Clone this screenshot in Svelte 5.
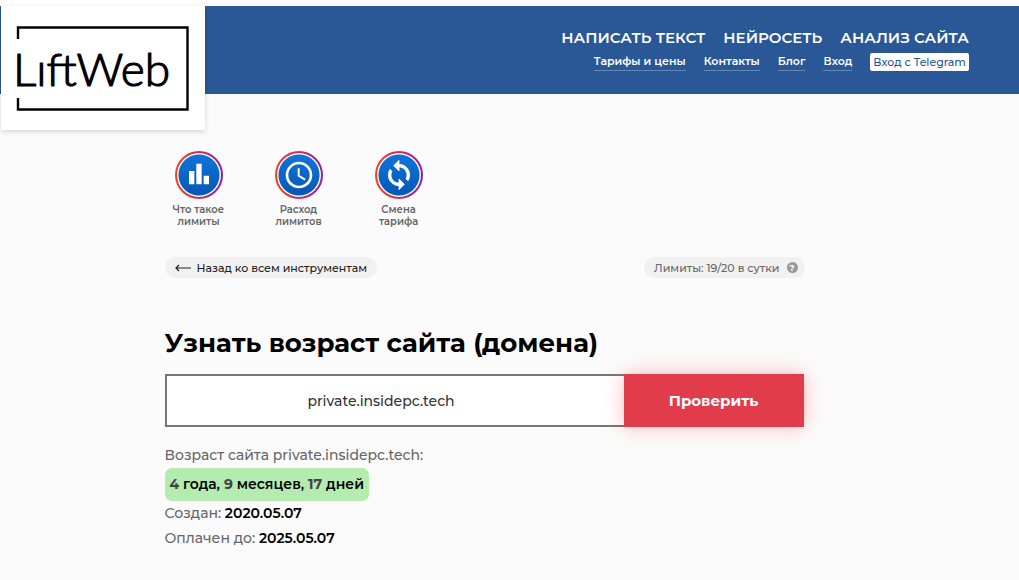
<script>
	let domain = 'private.insidepc.tech';

	const mainMenu = ['Написать текст', 'Нейросеть', 'Анализ сайта'];
	const subMenu = ['Тарифы и цены', 'Контакты', 'Блог', 'Вход'];

	const stories = [
		{ icon: 'chart', first: 'Что такое', second: 'лимиты' },
		{ icon: 'clock', first: 'Расход', second: 'лимитов' },
		{ icon: 'sync', first: 'Смена', second: 'тарифа' }
	];
</script>

<div class="page">
	<header>
		<a class="logo" href="#home" aria-label="LiftWeb">
			<svg viewBox="0 0 204 124" width="204" height="124">
				<path d="M17 33V21.500H186.500V103.500H17V92" fill="none" stroke="#000" stroke-width="2.400" />
				<text x="12" y="80">LıftWeb</text>
			</svg>
		</a>
		<nav>
			<div class="main-menu">
				{#each mainMenu as item}
					<a href="#menu">{item}</a>
				{/each}
			</div>
			<div class="sub-menu">
				{#each subMenu as item}
					<a href="#menu">{item}</a>
				{/each}
				<button class="telegram">Вход с Telegram</button>
			</div>
		</nav>
	</header>

	<main>
		<div class="stories">
			{#each stories as story}
				<a class="story" href="#story">
					<span class="ring">
						<svg viewBox="0 0 24 24" width="32" height="32">
							{#if story.icon == 'chart'}
								<path d="M4.500 9h4v10h-4zM10 3.500h4V19h-4zM15.500 12.500h4V19h-4z" />
							{:else if story.icon == 'clock'}
								<path d="M12 2C6.500 2 2 6.500 2 12s4.500 10 10 10 10-4.500 10-10S17.500 2 12 2zm0 18c-4.400 0-8-3.600-8-8s3.600-8 8-8 8 3.600 8 8-3.600 8-8 8zm.5-13H11v6l5.200 3.200.8-1.300-4.500-2.700V7z" />
							{:else}
								<path d="M12 4V1L8 5l4 4V6c3.300 0 6 2.700 6 6 0 1-.25 1.970-.7 2.800l1.460 1.460A7.900 7.900 0 0 0 20 12c0-4.420-3.580-8-8-8zm0 14c-3.310 0-6-2.690-6-6 0-1 .25-1.970.7-2.800L5.240 7.740A7.900 7.900 0 0 0 4 12c0 4.420 3.580 8 8 8v3l4-4-4-4v3z" stroke="#fff" stroke-width=".6" />
							{/if}
						</svg>
					</span>
					<span>{story.first}<br />{story.second}</span>
				</a>
			{/each}
		</div>

		<div class="bar">
			<a class="pill back" href="#tools">
				<svg viewBox="0 0 16 8" width="16" height="8">
					<path d="M16 4H1M4 1 1 4l3 3" fill="none" stroke="#222" stroke-width="1.200" />
				</svg>
				Назад ко всем инструментам
			</a>
			<div class="pill limits">
				Лимиты: 19/20 в сутки
				<button class="help" aria-label="Подробнее о лимитах">?</button>
			</div>
		</div>

		<h1>Узнать возраст сайта (домена)</h1>

		<form on:submit|preventDefault>
			<input type="text" aria-label="Домен" bind:value={domain} />
			<button class="check">Проверить</button>
		</form>

		<div class="result">
			<div>Возраст сайта private.insidepc.tech:</div>
			<div class="age"><b>4</b> года, <b>9</b> месяцев, <b>17</b> дней</div>
			<div>Создан: <strong>2020.05.07</strong></div>
			<div>Оплачен до: <strong>2025.05.07</strong></div>
		</div>
	</main>
</div>

<style>
:global(body) {
	margin: 0;
	background: #fbfbfb;
}

.page {
	border-top: 6px solid #fff;
	font-family: Montserrat, Inter, sans-serif;
	color: #666;
}

a {
	color: inherit;
	text-decoration: none;
}

button {
	border: 0;
	padding: 0;
	font-family: inherit;
	cursor: pointer;
}

header {
	position: relative;
	box-sizing: border-box;
	min-height: 88px;
	padding: 20px 50px 20px 220px;
	background: #2a5796;
	color: #fff;
}

.logo {
	position: absolute;
	top: 0;
	left: 1px;
	background: #fff;
	box-shadow: 0 2px 5px rgba(0, 0, 0, .15);
}

.logo svg {
	display: block;
}

.logo text {
	font: 300 46px Lato, sans-serif;
	stroke: #000;
	stroke-width: 1.2px;
	stroke-linejoin: round;
}

.main-menu,
.sub-menu {
	display: flex;
	justify-content: flex-end;
	align-items: center;
	gap: 18px;
}

.main-menu {
	font-size: 15px;
	line-height: 24px;
	font-weight: 600;
	text-transform: uppercase;
}

.sub-menu {
	margin-top: 3px;
	font-size: 11px;
	line-height: 17px;
	font-weight: 600;
}

.sub-menu a {
	border-bottom: 1px solid #6688b5;
}

.telegram {
	padding: 0 3px;
	border-radius: 2px;
	background: #fff;
	color: #2a5796;
	font-size: 11px;
	line-height: 18px;
	font-weight: 500;
}

main {
	max-width: 640px;
	margin: 0 auto;
	padding-right: 50px;
	padding-bottom: 30px;
}

.stories {
	display: flex;
	gap: 32px;
	padding-top: 57px;
}

.story {
	display: flex;
	flex-direction: column;
	align-items: center;
	gap: 5px;
	width: 68px;
	font-size: 10px;
	line-height: 12px;
	font-weight: 600;
	text-align: center;
	white-space: nowrap;
}

.ring {
	display: flex;
	align-items: center;
	justify-content: center;
	box-sizing: border-box;
	width: 48px;
	height: 48px;
	border: 2px solid transparent;
	border-radius: 50%;
	background:
		radial-gradient(circle, transparent 20px, #fff 21px) padding-box,
		linear-gradient(#1274dc, #0457b4) padding-box,
		linear-gradient(90deg, #ff3d12, #d62b50 50%, #a3168f) border-box;
}

.ring svg {
	fill: #fff;
}

.bar {
	display: flex;
	justify-content: space-between;
	margin-top: 29px;
}

.pill {
	display: flex;
	align-items: center;
	height: 21px;
	padding: 0 10px;
	border-radius: 11px;
	background: #f1f1f1;
	font-size: 11px;
	font-weight: 500;
}

.back {
	gap: 6px;
	color: #222;
}

.limits {
	gap: 7px;
	padding-right: 7px;
}

.help {
	width: 11px;
	height: 11px;
	border-radius: 50%;
	background: #999;
	color: #fff;
	font-size: 9px;
	line-height: 11px;
	font-weight: 700;
}

h1 {
	margin: 47px 0 13px;
	font-size: 26px;
	line-height: 36px;
	font-weight: 700;
	color: #000;
}

form {
	display: flex;
	height: 53px;
	margin-right: 1px;
}

input {
	flex: 1;
	min-width: 0;
	box-sizing: border-box;
	padding: 0 28px 0 0;
	border: 2px solid #767676;
	border-right: 0;
	background: #fff;
	font-family: inherit;
	font-size: 14px;
	font-weight: 500;
	text-align: center;
	color: #333;
}

.check {
	width: 180px;
	background: #e03c4b;
	box-shadow: 0 0 20px rgba(255, 60, 60, .35);
	color: #fff;
	font-size: 15px;
	font-weight: 700;
}

.result {
	margin-top: 16px;
	font-size: 14px;
	line-height: 25px;
	font-weight: 500;
}

.age {
	width: fit-content;
	padding: 4px 5px;
	border-radius: 7px;
	background: #b3ecae;
	font-weight: 600;
	color: #000;
}

.age b {
	font-weight: 700;
	color: #444;
}

strong {
	font-weight: 600;
	color: #000;
}
</style>
